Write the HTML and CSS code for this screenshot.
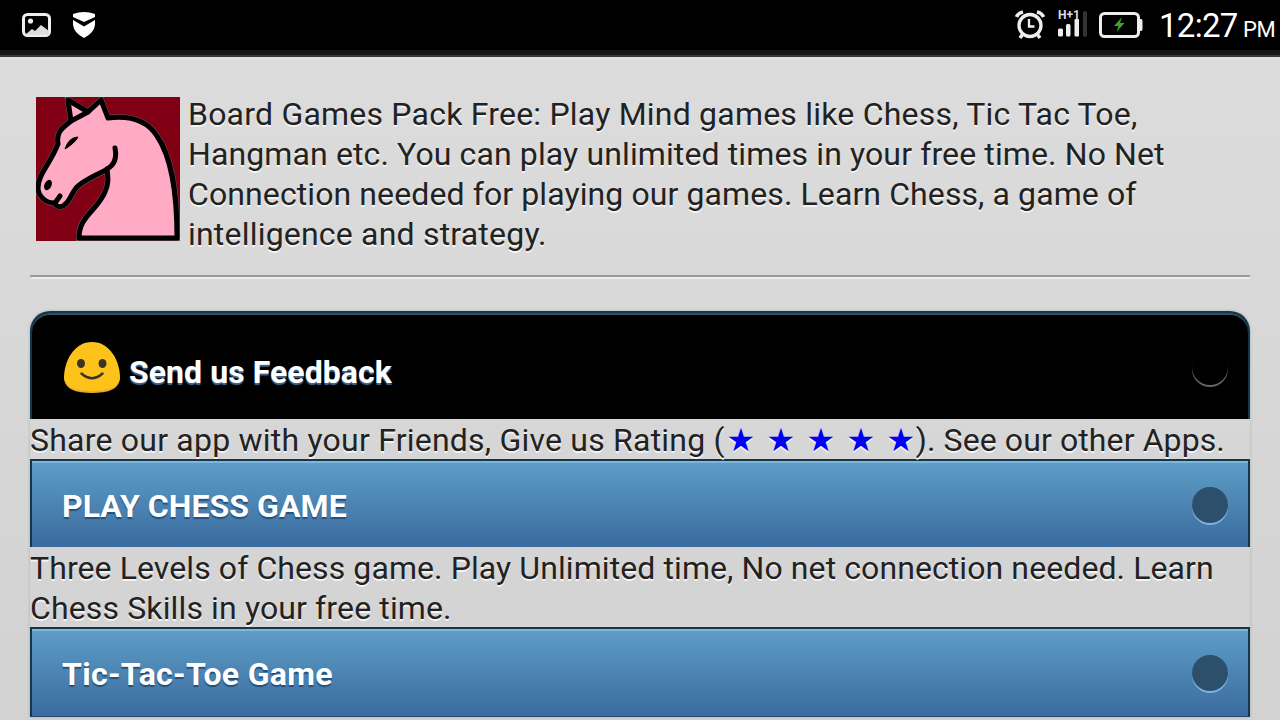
FILE: index.html
```html
<!DOCTYPE html>
<html lang="en">
<head>
<meta charset="utf-8">
<title>Board Games Pack Free</title>
<link rel="stylesheet" href="styles.css">
</head>
<body>
<header class="status">
  <svg class="picture" width="30" height="26" viewBox="0 0 30 26"><rect x="2.500" y="2.500" width="26" height="21" rx="4" fill="none" stroke="#eee" stroke-width="3"/><circle cx="9.500" cy="9" r="2.600" fill="#eee"/><path d="M4 23 L11 17 L14 19 L20 13 L28 19 V23Z" fill="#ddd"/></svg>
  <svg class="shield" width="24" height="28" viewBox="0 0 24 28"><path d="M1 3 Q12-1 23 3 V6 L12 11 L1 6Z M1 9 L12 15.500 L23 9 V14 Q22 22 12 27 Q2 22 1 14Z" fill="#fff"/></svg>
  <span class="spacer"></span>
  <svg class="alarm" width="32" height="30" viewBox="0 0 32 30" fill="none" stroke="#eee"><circle cx="16" cy="15.500" r="11" stroke-width="3.300"/><path d="M15 9 V16.500 H20.500" stroke-width="2.300"/><path d="M2.500 7 Q4 3 9 2 M29.500 7 Q28 3 23 2" stroke-width="3.600"/><path d="M8.500 24.500 L6 28 M23.500 24.500 L26 28" stroke-width="3.500"/></svg>
  <div class="network"><span class="network-type">H+1</span><svg width="30" height="18" viewBox="0 0 30 18"><g fill="#eee"><rect x="0" y="9.500" width="5" height="8" rx="1.500"/><rect x="8" y="5" width="4.500" height="12.500" rx="1.500"/><rect x="16.500" y="0" width="4.500" height="17.500" rx="1"/></g></svg><i class="weak"></i></div>
  <svg class="battery" width="44" height="28" viewBox="0 0 44 28"><rect x="1.500" y="2.500" width="38" height="23" rx="4" fill="none" stroke="#eee" stroke-width="3"/><path d="M40 8 H42 Q43.500 8 43.500 10 V18 Q43.500 20 42 20 H40Z" fill="#eee"/><path d="M23 6 L15 15 H19.500 L17.500 21 L25.500 12 H21Z" fill="#39a625"/></svg>
  <span class="time">12:27</span><span class="meridiem">PM</span>
</header>
<main class="page">
  <section class="intro">
    <svg class="knight" width="144" height="144" viewBox="0 0 144 144">
      <rect width="144" height="144" fill="#820013"/>
      <path d="M43 140 C43 119 61 114 69 95 C73 87 72 80 71 72 C62 78 48 82 40 91 C35 97 34 105 27 109 C22 111 20 108 18 106 C10 106 2 99 2 91 C2 77 15 66 22 47 C20 34 27 31 35 24 L32 3 L52 15 L65 3 L72 21 C96 18 112 25 121 39 C134 58 141 88 141 142 H43Z" fill="#ffabc5" stroke="#73515a" stroke-width="6"/>
      <path d="M43 141 C43 119 61 114 69 95 C73 87 72 80 71 72 C62 78 48 82 40 91 C35 97 34 105 27 109 C22 111 20 108 18 106 C10 106 2 99 2 91 C2 77 15 66 22 47 C20 34 27 31 35 24 L32 3 L52 15 L65 3 L72 21 C96 18 112 25 121 39 C134 58 141 88 141 141Z" fill="#ffabc5" stroke="#000" stroke-width="5" stroke-linejoin="round"/>
      <path d="M35 24 L52 15 M71 72 Q82 66 79 51" fill="none" stroke="#000" stroke-width="5" stroke-linecap="round"/>
      <path d="M29 52 Q33 40 42 40 Q39 46 29 52Z" stroke="#000"/>
      <ellipse cx="12" cy="88" rx="3.500" ry="5.500" transform="rotate(25 12 88)"/>
      <path d="M19 106 L24 99" stroke="#000" stroke-width="5" stroke-linecap="round"/>
    </svg>
    <p class="copy">
      <span class="line i1">Board Games Pack Free: Play Mind games like Chess, Tic Tac Toe,</span>
      <span class="line i2">Hangman etc. You can play unlimited times in your free time. No Net</span>
      <span class="line i3">Connection needed for playing our games. Learn Chess, a game of</span>
      <span class="line i4">intelligence and strategy.</span>
    </p>
  </section>
  <div class="rule"></div>
  <section class="list">
    <div class="bar feedback">
      <svg class="smile" width="58" height="54" viewBox="0 0 58 54"><path d="M29 1 C47 1 57 20 57 37 C57 46 45 51 29 51 C13 51 1 46 1 37 C1 20 11 1 29 1Z" fill="#fdc31a"/><path d="M2 41 Q8 50 29 50 Q50 50 56 41 Q53 52 29 52 Q5 52 2 41Z" fill="#e9ad25"/><ellipse cx="18" cy="22.500" rx="4" ry="4.500" fill="#3b3420"/><ellipse cx="39.500" cy="22.500" rx="4" ry="4.500" fill="#3b3420"/><path d="M18.500 32.500 Q29 42 39.500 32.500" fill="none" stroke="#3b3420" stroke-width="2.500" stroke-linecap="round"/></svg>
      <span class="title t1">Send us Feedback</span><i class="dot"></i>
    </div>
    <p class="copy row"><span class="line r1">Share our app with your Friends, Give us Rating (</span><span class="stars"><b>★</b><b>★</b><b>★</b><b>★</b><b>★</b></span><span class="line r1b">). See our other Apps.</span></p>
    <div class="bar"><span class="title t2">PLAY CHESS GAME</span><i class="dot"></i></div>
    <p class="copy"><span class="line r2">Three Levels of Chess game. Play Unlimited time, No net connection needed. Learn</span><span class="line r3">Chess Skills in your free time.</span></p>
    <div class="bar last"><span class="title t3">Tic-Tac-Toe Game</span><i class="dot"></i></div>
  </section>
</main>
</body>
</html>
```
FILE: styles.css
```css
* { box-sizing: border-box; }
body { margin: 0; width: 1280px; height: 720px; overflow: hidden; background: linear-gradient(#dcdcdc 57px, #d2d2d2); font: 32px/40px Roboto, sans-serif; color: #222; }
svg { display: block; flex: none; }
p { margin: 0; }
.status { height: 57px; display: flex; align-items: flex-start; background: linear-gradient(#000 50px, #141414 50px, #141414 55px, #353535 55px); color: #fff; overflow: hidden; }
.picture { margin: 12px 0 0 21px; }
.shield { margin: 11px 0 0 21px; }
.spacer { flex: 1; }
.alarm { margin: 10px 12px 0 0; }
.network { width: 30px; height: 30px; margin: 9px 11px 0 0; position: relative; }
.network-type { display: block; height: 10px; font-size: 12px; font-weight: 700; line-height: 12px; color: #ddd; }
.weak { position: absolute; left: 25px; top: 2px; width: 4px; height: 26px; background: #333; border-radius: 2px; }
.battery { margin: 11px 16px 0 0; }
.time { width: 79px; margin-right: 5px; font-size: 33px; line-height: 40px; letter-spacing: -0.7px; margin-top: 6px; white-space: nowrap; }
.meridiem { width: 37px; font-size: 22px; line-height: 30px; letter-spacing: -0.3px; margin-top: 15px; }
.page { padding: 37px 30px 0; }
.intro { display: flex; gap: 8px; padding-left: 6px; height: 181px; }
.knight { margin-top: 3px; }
.copy { text-shadow: 0 2px 0 #f3f3f3; }
.line { display: block; width: max-content; white-space: nowrap; }
.i1 { letter-spacing: 0.21px; }
.i2 { letter-spacing: 0.12px; }
.i3 { letter-spacing: 0.1px; }
.i4 { letter-spacing: 0.2px; }
.r1 { letter-spacing: 0.22px; }
.r1b { letter-spacing: 0.1px; }
.r2 { letter-spacing: 0.09px; }
.r3 { letter-spacing: 0.13px; }
.t1 { letter-spacing: 0.06px; }
.t2 { letter-spacing: 0.07px; }
.t3 { letter-spacing: 0.32px; }
.rule { height: 4px; border-top: 2px solid #999; border-left: 1px solid #aaa; border-bottom: 2px solid #eee; }
.list { margin-top: 32px; border-radius: 20px 20px 0 0; box-shadow: 0 0 3px rgba(0,0,0,.22); }
.list .copy { padding-top: 1px; margin-bottom: -1px; }
.bar { height: 88px; display: flex; align-items: center; padding: 2px 20px 0 30px; border: 2px solid #12384f; border-bottom: 0; background: linear-gradient(#5f9ec8, #396b9e); box-shadow: inset 0 2px #81b5d9; color: #fff; font-weight: 700; text-shadow: 0 2px 1px #254f7b; }
.bar .title { padding-top: 1px; }
.bar.last { height: 90px; padding-top: 1px; border-bottom: 1px solid #294b70; }
.bar.feedback { height: 108px; background: #000; border-radius: 20px 20px 0 0; box-shadow: inset 0 2px #344e5a; text-shadow: 0 2px 1px #3e6790; }
.smile { margin: 2px 8px 0 1px; }
.bar.feedback .title { padding-top: 10px; }
.title { flex: 1; white-space: nowrap; }
.dot { flex: none; width: 36px; height: 36px; border-radius: 50%; background: #2c506b; box-shadow: 0 2px #80b2dc; }
.feedback .dot { margin-bottom: 1px; background: #000; box-shadow: 0 2px #666; }
.row { display: flex; }
.stars { display: flex; width: 191px; gap: 8px; }
.stars b { width: 32px; flex: none; text-align: center; color: #0000f5; font: 32px/40px "DejaVu Sans", sans-serif; }
```
